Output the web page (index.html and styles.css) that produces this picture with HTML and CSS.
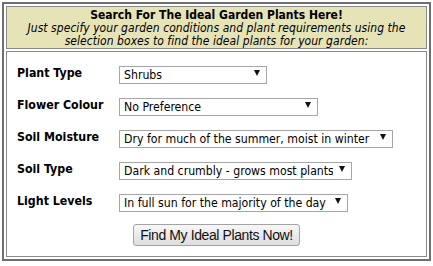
FILE: index.html
```html
<!DOCTYPE html>
<html lang="en">
<head>
    <meta charset="UTF-8">
    <title>Plant Finder</title>
    <link rel="stylesheet" href="styles.css">
</head>
<body>
    <div class="finder">
        <div class="finder-head">
            <h2>Search For The Ideal Garden Plants Here!</h2>
            <p>Just specify your garden conditions and plant requirements using the selection boxes to find the ideal plants for your garden:</p>
        </div>

        <form class="finder-body">
            <div class="fields">
                <label for="plantType">Plant Type</label>
                <div class="pick w-type">
                    <select id="plantType">
                        <option>Shrubs</option>
                    </select>
                </div>

                <label for="flowerColour">Flower Colour</label>
                <div class="pick w-colour">
                    <select id="flowerColour">
                        <option>No Preference</option>
                    </select>
                </div>

                <label for="soilMoisture">Soil Moisture</label>
                <div class="pick w-moisture">
                    <select id="soilMoisture">
                        <option>Dry for much of the summer, moist in winter</option>
                    </select>
                </div>

                <label for="soilType">Soil Type</label>
                <div class="pick w-soil">
                    <select id="soilType">
                        <option>Dark and crumbly - grows most plants</option>
                    </select>
                </div>

                <label for="lightLevels">Light Levels</label>
                <div class="pick w-light">
                    <select id="lightLevels">
                        <option>In full sun for the majority of the day</option>
                    </select>
                </div>
            </div>

            <div class="actions">
                <button type="submit">Find My Ideal Plants Now!</button>
            </div>
        </form>
    </div>
</body>
</html>
```

FILE: styles.css
```css
body {
    margin: 0;
    background-color: #fff;
    font-family: "DejaVu Sans", Verdana, sans-serif;
    font-stretch: condensed;
    color: #000;
}

.finder {
    box-sizing: border-box;
    width: 429px;
    margin: 2px 0 0 2px;
    padding: 2px;
    border: 2px solid #6f6f6f;
    display: flex;
    flex-direction: column;
    gap: 2px;
}

.finder-head {
    background-color: #e6e3b7;
    border: 1px solid #8a8a8a;
    padding: 2px 4px 0;
    text-align: center;
    line-height: 13px;
}

.finder-head h2 {
    margin: 0;
    font-size: 12px;
    font-weight: bold;
}

.finder-head p {
    margin: 0;
    font-size: 12px;
    letter-spacing: 0.05px;
    font-style: italic;
}

.finder-body {
    border: 1px solid #8a8a8a;
    padding: 12px 10px 10px;
    margin: 0;
}

.fields {
    display: grid;
    grid-template-columns: 102px auto;
    row-gap: 14px;
    align-items: center;
    justify-items: start;
}

.fields label {
    font-size: 12.3px;
    font-weight: bold;
}

.pick {
    position: relative;
    height: 18px;
}

.pick select {
    appearance: none;
    -webkit-appearance: none;
    box-sizing: border-box;
    width: 100%;
    height: 18px;
    margin: 0;
    padding: 0 18px 0 4px;
    border: 1px solid #a6a6a6;
    border-radius: 0;
    background-color: #fff;
    font-family: "DejaVu Sans", Verdana, sans-serif;
    font-stretch: condensed;
    font-size: 12.2px;
    line-height: 16px;
    color: #000;
}

/* small black arrow like the old dropdowns */
.pick::after {
    content: "";
    position: absolute;
    right: 7px;
    top: 6px;
    border-left: 3px solid transparent;
    border-right: 3px solid transparent;
    border-top: 6px solid #111;
    pointer-events: none;
}

.w-type { width: 148px; }
.w-colour { width: 199px; }
.w-moisture { width: 274px; }
.w-soil { width: 233px; }
.w-light { width: 229px; }

.actions {
    margin-top: 14px;
    text-align: center;
}

.actions button {
    box-sizing: border-box;
    width: 167px;
    height: 22px;
    padding: 0;
    border: 1px solid #a3a3a3;
    border-radius: 3px;
    background: linear-gradient(#f7f7f7, #dedede);
    font-family: "Liberation Sans", Arial, sans-serif;
    font-size: 14px;
    letter-spacing: -0.4px;
    color: #111;
}
```
